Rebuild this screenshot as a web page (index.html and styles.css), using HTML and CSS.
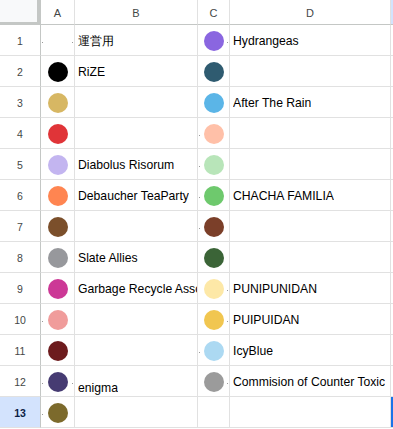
FILE: index.html
```html
<!DOCTYPE html>
<html lang="en">
  <head>
    <meta charset="UTF-8" />
    <meta name="viewport" content="width=device-width, initial-scale=1.0" />
    <title>Teams</title>
    <link rel="stylesheet" href="styles.css">
  </head>
  <body>
    <div class="sheet" id="sheet">
      <div class="corner"></div>
      <div class="col-head">A</div>
      <div class="col-head">B</div>
      <div class="col-head">C</div>
      <div class="col-head">D</div>
      <div class="col-head selected"></div>
    </div>

    <script>
      // [A colour, B name, C colour, D name, extra classes]
      const rows = [
        [null, "運営用", "#8a66e0", "Hydrangeas", { a: "dot-l dot-r", c: "dot-r" }],
        ["#000000", "RiZE", "#2f5b70", ""],
        ["#d7b763", "", "#5bb5e7", "After The Rain"],
        ["#e03438", "", "#ffc0a8", "", { c: "dot-l" }],
        ["#c3b5f0", "Diabolus Risorum", "#b8e5b9", "", { c: "dot-l" }],
        ["#ff8551", "Debaucher TeaParty", "#6ec96d", "CHACHA FAMILIA", { c: "dot-l" }],
        ["#7b4f2b", "", "#7b3f29", "", { c: "dot-l" }],
        ["#97989c", "Slate Allies", "#3b6437", ""],
        ["#cc3896", "Garbage Recycle Association", "#fde8a7", "PUNIPUNIDAN", { c: "dot-r" }],
        ["#f09c9b", "", "#f1c650", "PUIPUIDAN", { a: "dot-l", c: "dot-r" }],
        ["#6d1b1d", "", "#acd9f2", "IcyBlue", { c: "dot-l" }],
        ["#463b72", "enigma", "#9b9b9b", "Commision of Counter Toxic", { a: "dot-l dot-r", b: "bottom", c: "dot-r" }],
        ["#7c6a2c", "", null, "", { a: "dot-l" }],
      ];

      const sheet = document.getElementById("sheet");

      function addCell(className, content) {
        const el = document.createElement("div");
        el.className = className;
        if (content) el.appendChild(content);
        sheet.appendChild(el);
        return el;
      }

      function circle(color) {
        if (!color) return null;
        const dot = document.createElement("span");
        dot.className = "chip";
        dot.style.background = color;
        return dot;
      }

      function text(value) {
        if (!value) return null;
        const span = document.createElement("span");
        span.className = "val";
        span.textContent = value;
        return span;
      }

      rows.forEach((row, i) => {
        const extra = row[4] || {};
        const num = i + 1;
        addCell("row-head" + (num === 13 ? " selected" : ""), text(String(num)));
        addCell("cell pic " + (extra.a || ""), circle(row[0]));
        addCell("cell " + (extra.b || ""), text(row[1]));
        addCell("cell pic " + (extra.c || ""), circle(row[2]));
        addCell("cell", text(row[3]));
        addCell("cell last" + (num === 13 ? " active" : ""), null);
      });
    </script>
  </body>
</html>
```

FILE: styles.css
```css
body {
  margin: 0;
  background: #fff;
  font-family: "Liberation Sans", Arial, sans-serif;
  color: #000;
  overflow: hidden;
}

.sheet {
  display: grid;
  grid-template-columns: 41px 34px 123px 32px 161px 1fr;
  grid-template-rows: 25px;
  grid-auto-rows: 31px;
  width: 393px;
}

.corner {
  background: #f8f9fa;
  border-right: 4px solid #c4c7c5;
  border-bottom: 3px solid #c4c7c5;
  box-sizing: border-box;
}

.col-head {
  display: flex;
  align-items: center;
  justify-content: center;
  padding-top: 2px;
  font-size: 11px;
  color: #444746;
  background: #fff;
  border-right: 1px solid #e1e1e1;
  border-bottom: 1px solid #c4c7c5;
  box-sizing: border-box;
}

.row-head {
  display: flex;
  align-items: center;
  justify-content: center;
  padding-top: 2px;
  font-size: 10.5px;
  color: #444746;
  border-right: 1px solid #c4c7c5;
  border-bottom: 1px solid #e1e1e1;
  box-sizing: border-box;
}

.selected {
  background: #d3e3fd;
  color: #0b1d45;
  font-weight: bold;
}

.cell {
  position: relative;
  display: flex;
  align-items: center;
  padding: 2px 0 0 3px;
  font-size: 12.2px;
  white-space: nowrap;
  overflow: hidden;
  border-right: 1px solid #e1e1e1;
  border-bottom: 1px solid #e1e1e1;
  box-sizing: border-box;
}

.cell .val {
  overflow: hidden;
}

.cell.bottom {
  align-items: flex-end;
  padding-bottom: 1px;
}

.cell.pic {
  justify-content: center;
  padding-left: 0;
}

.cell.last {
  border-right: none;
}

.cell.active {
  box-shadow: inset 2px 0 0 #1a73e8;
}

.chip {
  width: 20px;
  height: 20px;
  border-radius: 50%;
}

.dot-l::before,
.dot-r::after {
  content: "";
  position: absolute;
  top: 17px;
  width: 1px;
  height: 1px;
  background: #9a9a9a;
}

.dot-l::before {
  left: 1px;
}

.dot-r::after {
  right: 1px;
}
```
